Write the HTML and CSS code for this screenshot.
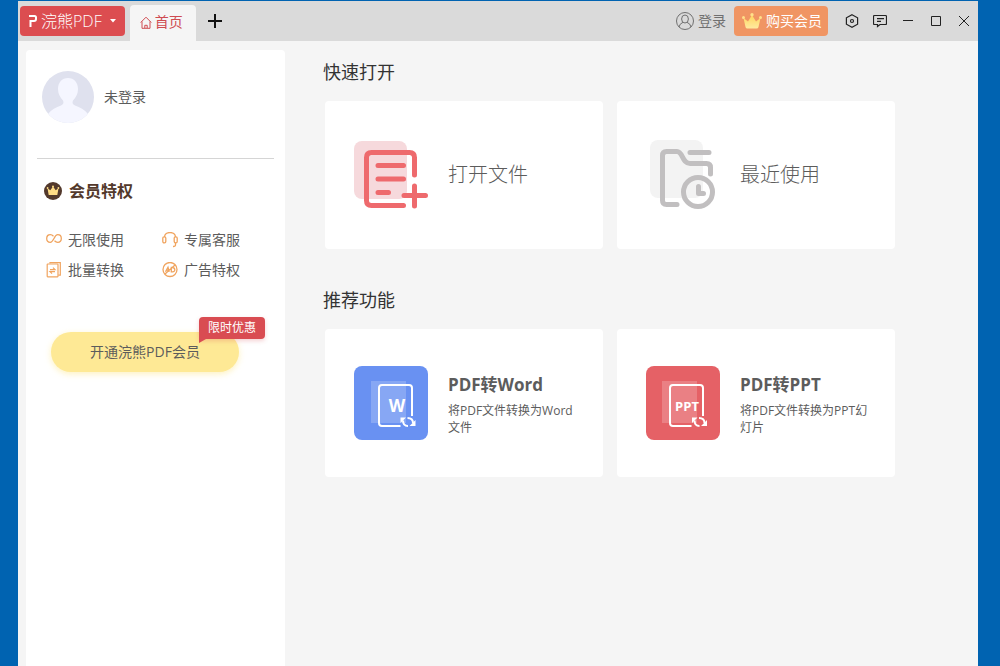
FILE: index.html
```html
<!DOCTYPE html>
<html lang="zh-CN">
<head>
<meta charset="utf-8">
<meta name="viewport" content="width=device-width, initial-scale=1">
<title>浣熊PDF</title>
<link rel="stylesheet" href="styles.css">
</head>
<body>
<div class="window">
  <header class="titlebar">
    <button class="brand" type="button">
      <svg width="8" height="14" viewBox="0 0 8 14" fill="none" stroke="currentColor" stroke-width="2"><path d="M0 2h5.500q1.500 0 1.500 1.500v1.500q0 2-2 2H1.500V13"/></svg>
      <span>浣熊PDF</span>
      <svg class="caret" width="6" height="4" viewBox="0 0 6 4" fill="currentColor"><path d="M0 0h6L3 3.500z"/></svg>
    </button>
    <button class="tab" type="button">
      <svg width="12" height="13" viewBox="0 0 12 13" fill="none" stroke="currentColor"><path d="M.7 6.500 6 1.200l5.300 5.300M2 5.500v6.800h8V5.500"/><path d="M4.800 12V9.300h2.400V12"/></svg>
      <span>首页</span>
    </button>
    <button class="icon-button" type="button" aria-label="新建标签">
      <svg width="14" height="14" viewBox="0 0 14 14" stroke="#111" stroke-width="2"><path d="M0 7h14M7 0v14"/></svg>
    </button>
    <button class="login" type="button">
      <svg width="18" height="18" viewBox="0 0 18 18" fill="none" stroke="currentColor"><circle cx="9" cy="9" r="8.500"/><ellipse cx="9" cy="7" rx="3.400" ry="4"/><path d="M3 15q.5-3.300 4-4.700M15 15q-.5-3.300-4-4.700"/></svg>
      <span>登录</span>
    </button>
    <button class="buy" type="button">
      <svg width="20" height="16" viewBox="0 0 20 16"><defs><linearGradient id="gold" x2="0" y2="1"><stop stop-color="#ffd45c"/><stop offset="1" stop-color="#ffeaa0"/></linearGradient></defs><path fill="url(#gold)" d="M1.500 5 6 8.500 10 2l4 6.500L18.500 5 16.500 14q-.3 1.500-2 1.500h-9q-1.700 0-2-1.500z"/><g fill="#ffe08a"><circle cx="1.500" cy="4.500" r="1.500"/><circle cx="10" cy="1.800" r="1.700"/><circle cx="18.500" cy="4.500" r="1.500"/></g></svg>
      <span>购买会员</span>
    </button>
    <nav class="controls" aria-label="窗口">
      <button class="icon-button" type="button" aria-label="设置"><svg width="14" height="14" viewBox="0 0 14 14" fill="none" stroke="currentColor" stroke-width="1.200"><path d="m7 .8 5.600 3v6.400L7 13.200l-5.600-3V3.800z"/><circle cx="7" cy="7" r="1.500"/></svg></button>
      <button class="icon-button" type="button" aria-label="反馈"><svg width="14" height="14" viewBox="0 0 14 14" fill="none" stroke="currentColor" stroke-width="1.200"><path d="M1.500 1.500h11q1 0 1 1v7q0 1-1 1H7L4.500 12.500v-2h-3q-1 0-1-1v-7q0-1 1-1zM4 4.600h7M4 7.400h4"/></svg></button>
      <button class="icon-button" type="button" aria-label="最小化"><svg width="10" height="10" viewBox="0 0 10 10" stroke="currentColor"><path d="M0 4.500h10"/></svg></button>
      <button class="icon-button" type="button" aria-label="最大化"><svg width="10" height="10" viewBox="0 0 10 10" fill="none" stroke="currentColor"><path d="M.5.5h9v9h-9z"/></svg></button>
      <button class="icon-button" type="button" aria-label="关闭"><svg width="12" height="12" viewBox="0 0 12 12" stroke="currentColor"><path d="m1 1 10 10M11 1 1 11"/></svg></button>
    </nav>
  </header>

  <div class="content">
    <aside class="sidebar">
      <div class="profile">
        <svg width="52" height="52" viewBox="0 0 52 52"><defs><clipPath id="avatar"><circle cx="26" cy="26" r="26"/></clipPath></defs><g clip-path="url(#avatar)"><path fill="#dfe1ee" d="M0 0h52v52H0z"/><path fill="#f5f6ff" d="M26 7c-6 0-10 4.500-10 11 0 5 2 8 5 11.500 1 2 .5 4-2 5C14 36.500 9.500 38.500 6 43v9h40v-9c-3.500-4.500-8-6.500-13-8.500-2.500-1-3-3-2-5 3-3.500 5-6.500 5-11.500 0-6.500-4-11-10-11z"/></g></svg>
        <span>未登录</span>
      </div>
      <section class="benefits">
        <h2 class="benefits-title">
          <svg width="18" height="18" viewBox="0 0 18 18"><circle cx="9" cy="9" r="9" fill="#53392c"/><path fill="#ffdc85" d="m3.500 6.200 2.800 2 2.700-3.700 2.700 3.700 2.800-2-1.200 6.800H4.700z"/><g fill="#ffdc85"><circle cx="3.600" cy="6" r=".9"/><circle cx="9" cy="4.500" r="1"/><circle cx="14.400" cy="6" r=".9"/></g></svg>
          会员特权
        </h2>
        <ul class="benefit-list">
          <li><svg width="16" height="16" viewBox="0 0 16 16" fill="none" stroke="currentColor" stroke-width="1.300"><path d="M7.500 4.300Q6 2.700 4.300 2.700C2 2.700.7 4.200.7 6.500s1.300 3.800 3.600 3.800C7.800 10.300 8.200 2.700 11.700 2.700c2.300 0 3.600 1.500 3.600 3.800s-1.300 3.800-3.600 3.800q-1.700 0-3.200-1.600"/></svg>无限使用</li>
          <li><svg width="16" height="16" viewBox="0 0 16 16" fill="none" stroke="currentColor" stroke-width="1.300"><path d="M2.500 5C2.500-1 13.500-1 13.500 5M13.500 10.500v2.500q0 1.500-2.500 1.500"/><rect x=".8" y="4.800" width="3" height="6" rx="1.300"/><rect x="12.200" y="4.800" width="3" height="6" rx="1.300"/></svg>专属客服</li>
          <li><svg width="16" height="16" viewBox="0 0 16 16" fill="none" stroke="currentColor" stroke-width="1.200"><path d="M4 1.600V.6h10.300v12.500h-2"/><rect x="1.200" y="2" width="10.800" height="12.800" rx=".5"/><path d="M4 7.600h5L7 5.600M9 9.600H4l2 2"/></svg>批量转换</li>
          <li><svg width="16" height="16" viewBox="0 0 16 16" fill="none" stroke="currentColor" stroke-width="1.300"><circle cx="8" cy="7.500" r="7"/><path d="m3 12 10-9M3.500 9.800 6 5.200l1.200 4.600M4.700 8.200h2M9.300 5.500v4.300h1.200c3.500 0 2.700-4.500-.2-4.300z"/></svg>广告特权</li>
        </ul>
      </section>
      <div class="upgrade">
        <button class="upgrade-button" type="button">开通浣熊PDF会员</button>
        <span class="badge">限时优惠</span>
      </div>
    </aside>

    <main class="main">
      <section class="group">
        <h1 class="group-title">快速打开</h1>
        <div class="cards">
          <button class="card" type="button">
            <svg class="card-icon" viewBox="0 0 74 74" fill="none" stroke="#ee6a6d" stroke-width="5" stroke-linecap="round" stroke-linejoin="round"><rect y="3" width="53" height="58" rx="8" fill="#f6d9dc" stroke="none"/><path d="M60.500 37V19.500q0-5-5-5h-38q-5 0-5 5v43q0 5 5 5h32M24 27.500h25.500M24 41h25.500M24 54.500h10.500M50 57.500h21.500M60.500 48v20"/></svg>
            <span class="card-label">打开文件</span>
          </button>
          <button class="card" type="button">
            <svg class="card-icon" viewBox="0 0 74 74" fill="none" stroke="#c1bfc0" stroke-width="5" stroke-linecap="round" stroke-linejoin="round"><rect x="4" y="2" width="53" height="58" rx="8" fill="#f3f3f3" stroke="none"/><path d="M31 66.500H20.500q-4 0-4-4v-45q0-4 4-4H31c6 0 5 12 13 12h16.500q4 0 4 4V36M44 14.500h19"/><circle cx="52" cy="54" r="14.500"/><path d="M52.500 48.500v7h5"/></svg>
            <span class="card-label">最近使用</span>
          </button>
        </div>
      </section>
      <section class="group">
        <h1 class="group-title">推荐功能</h1>
        <div class="cards">
          <button class="card" type="button">
            <svg class="card-icon" viewBox="0 0 74 74"><rect width="74" height="74" rx="8" fill="#6991f2"/><path fill="#fff" fill-opacity=".2" d="M17 15h35v42H17z"/><path fill="none" stroke="#fff" stroke-width="2" d="M58 50V22q0-3-3-3H28q-3 0-3 3v35q0 3 3 3h18.500"/><text class="tile-text" x="43" y="46" font-size="17">W</text><g fill="none" stroke="#fff" stroke-width="2"><path d="M49 54.500c0 3.500 2 5.500 5 5.500M53.500 52c3.500 0 5.500 1.500 5.500 5"/></g><path fill="#fff" d="M46.500 57V51.500H52zM61.500 54v6H55.500z"/></svg>
            <span class="card-text"><strong>PDF转Word</strong><span>将PDF文件转换为Word文件</span></span>
          </button>
          <button class="card" type="button">
            <svg class="card-icon" viewBox="0 0 74 74"><rect width="74" height="74" rx="8" fill="#e56166"/><path fill="#fff" fill-opacity=".2" d="M16 15h35v42H16z"/><path fill="none" stroke="#fff" stroke-width="2" d="M57 50V22q0-3-3-3H27q-3 0-3 3v35q0 3 3 3h18.500"/><text class="tile-text" x="41" y="45" font-size="13">PPT</text><g fill="none" stroke="#fff" stroke-width="2"><path d="M48.500 54.500c0 3.500 2 5.500 5 5.500M53 52c3.500 0 5.500 1.500 5.500 5"/></g><path fill="#fff" d="M46 57V51.500H51.500zM61 54v6H55z"/></svg>
            <span class="card-text"><strong>PDF转PPT</strong><span>将PDF文件转换为PPT幻灯片</span></span>
          </button>
        </div>
      </section>
    </main>
  </div>
</div>
</body>
</html>
```
FILE: styles.css
```css
* { box-sizing: border-box; }

body {
  margin: 0;
  min-height: 100vh;
  display: flex;
  padding: 1px 22px 0 18px;
  background: #0063b1;
  color: #5c5c5c;
  font: 14px/20px "Open Sans", "Noto Sans CJK SC", sans-serif;
}

button {
  margin: 0;
  padding: 0;
  border: 0;
  background: none;
  color: inherit;
  font: inherit;
  cursor: pointer;
}

svg { display: block; flex: none; }

h1, h2, ul { margin: 0; padding: 0; }

.window {
  flex: 1;
  min-width: 0;
  display: flex;
  flex-direction: column;
  background: #f5f5f5;
}

.titlebar {
  display: flex;
  align-items: center;
  height: 40px;
  padding: 0 0 0 2px;
  background: #dadada;
  white-space: nowrap;
}

.brand {
  display: flex;
  align-items: center;
  gap: 4px;
  height: 30px;
  padding: 0 9px;
  border-radius: 4px;
  background: #dc4d50;
  color: #fff;
  font-size: 16px;
  font-weight: 300;
}

.caret { margin-left: 4px; }

.tab {
  align-self: flex-end;
  display: flex;
  align-items: center;
  gap: 3px;
  height: 36px;
  margin: 0 5px 0 5px;
  padding: 0 13px 2px 10px;
  border-radius: 4px 4px 0 0;
  background: #f5f5f5;
  color: #cf4b51;
}

.icon-button {
  width: 28px;
  height: 28px;
  display: grid;
  place-items: center;
}

.login {
  display: flex;
  align-items: center;
  gap: 4px;
  margin-left: auto;
  color: #707070;
}

.buy {
  display: flex;
  align-items: center;
  gap: 4px;
  height: 30px;
  margin: 0 10px 0 8px;
  padding: 0 6px 0 8px;
  border-radius: 4px;
  background: #f09563;
  color: #fff;
}

.controls { display: flex; color: #222; }

.content {
  flex: 1;
  display: flex;
  padding: 9px 0 0 8px;
}

.sidebar {
  flex: none;
  width: 259px;
  padding: 21px 11px 0;
  border-radius: 4px 4px 0 0;
  background: #fff;
}

.profile {
  display: flex;
  align-items: center;
  gap: 10px;
  padding: 0 0 35px 5px;
  border-bottom: 1px solid #d5d5d5;
}

.benefits { padding: 20px 0 0 7px; }

.benefits-title {
  display: flex;
  align-items: center;
  gap: 7px;
  color: #53392c;
  font-size: 16px;
  line-height: 24px;
}

.benefit-list {
  display: grid;
  grid-template-columns: 1fr 1fr;
  gap: 10px 4px;
  padding: 27px 0 0 2px;
  list-style: none;
}

.benefit-list li {
  display: flex;
  align-items: center;
  gap: 6px;
}

.benefit-list svg { color: #f0a45f; }

.upgrade {
  position: relative;
  margin: 52px 9px 0 14px;
  padding-right: 26px;
}

.upgrade-button {
  width: 100%;
  height: 40px;
  border-radius: 20px;
  background: #fee995;
  box-shadow: 0 2px 6px #fee99599;
}

.badge {
  position: absolute;
  top: -15px;
  right: 0;
  padding: 0 9px;
  border-radius: 4px 4px 4px 0;
  background: #d94c52;
  box-shadow: 0 2px 4px #d94c5240;
  color: #fff;
  font-size: 12px;
  line-height: 22px;
}

.badge::after {
  content: "";
  position: absolute;
  top: 100%;
  left: 0;
  border-top: 4px solid #d94c52;
  border-right: 7px solid transparent;
}

.main {
  flex: 1;
  min-width: 0;
  display: grid;
  align-content: start;
  gap: 37px;
  padding: 8px 83px 24px 38px;
}

.group-title {
  padding-bottom: 15px;
  color: #333;
  font-size: 18px;
  font-weight: 400;
  line-height: 28px;
}

.cards {
  display: grid;
  grid-template-columns: 1fr 1fr;
  gap: 14px;
  padding-left: 2px;
}

.card {
  display: flex;
  align-items: center;
  gap: 20px;
  min-height: 148px;
  padding: 0 24px 0 29px;
  border-radius: 4px;
  background: #fff;
  text-align: left;
}

.card-icon { width: 74px; height: 74px; }

.card-label { font-size: 20px; font-weight: 300; line-height: 28px; }

.card-text {
  display: grid;
  gap: 6px;
  padding-top: 4px;
  font-size: 12px;
  line-height: 17px;
}

.card-text strong { font-size: 17px; line-height: 22px; }

.tile-text {
  fill: #fff;
  font-family: "Open Sans", sans-serif;
  font-weight: 700;
  text-anchor: middle;
}
```
